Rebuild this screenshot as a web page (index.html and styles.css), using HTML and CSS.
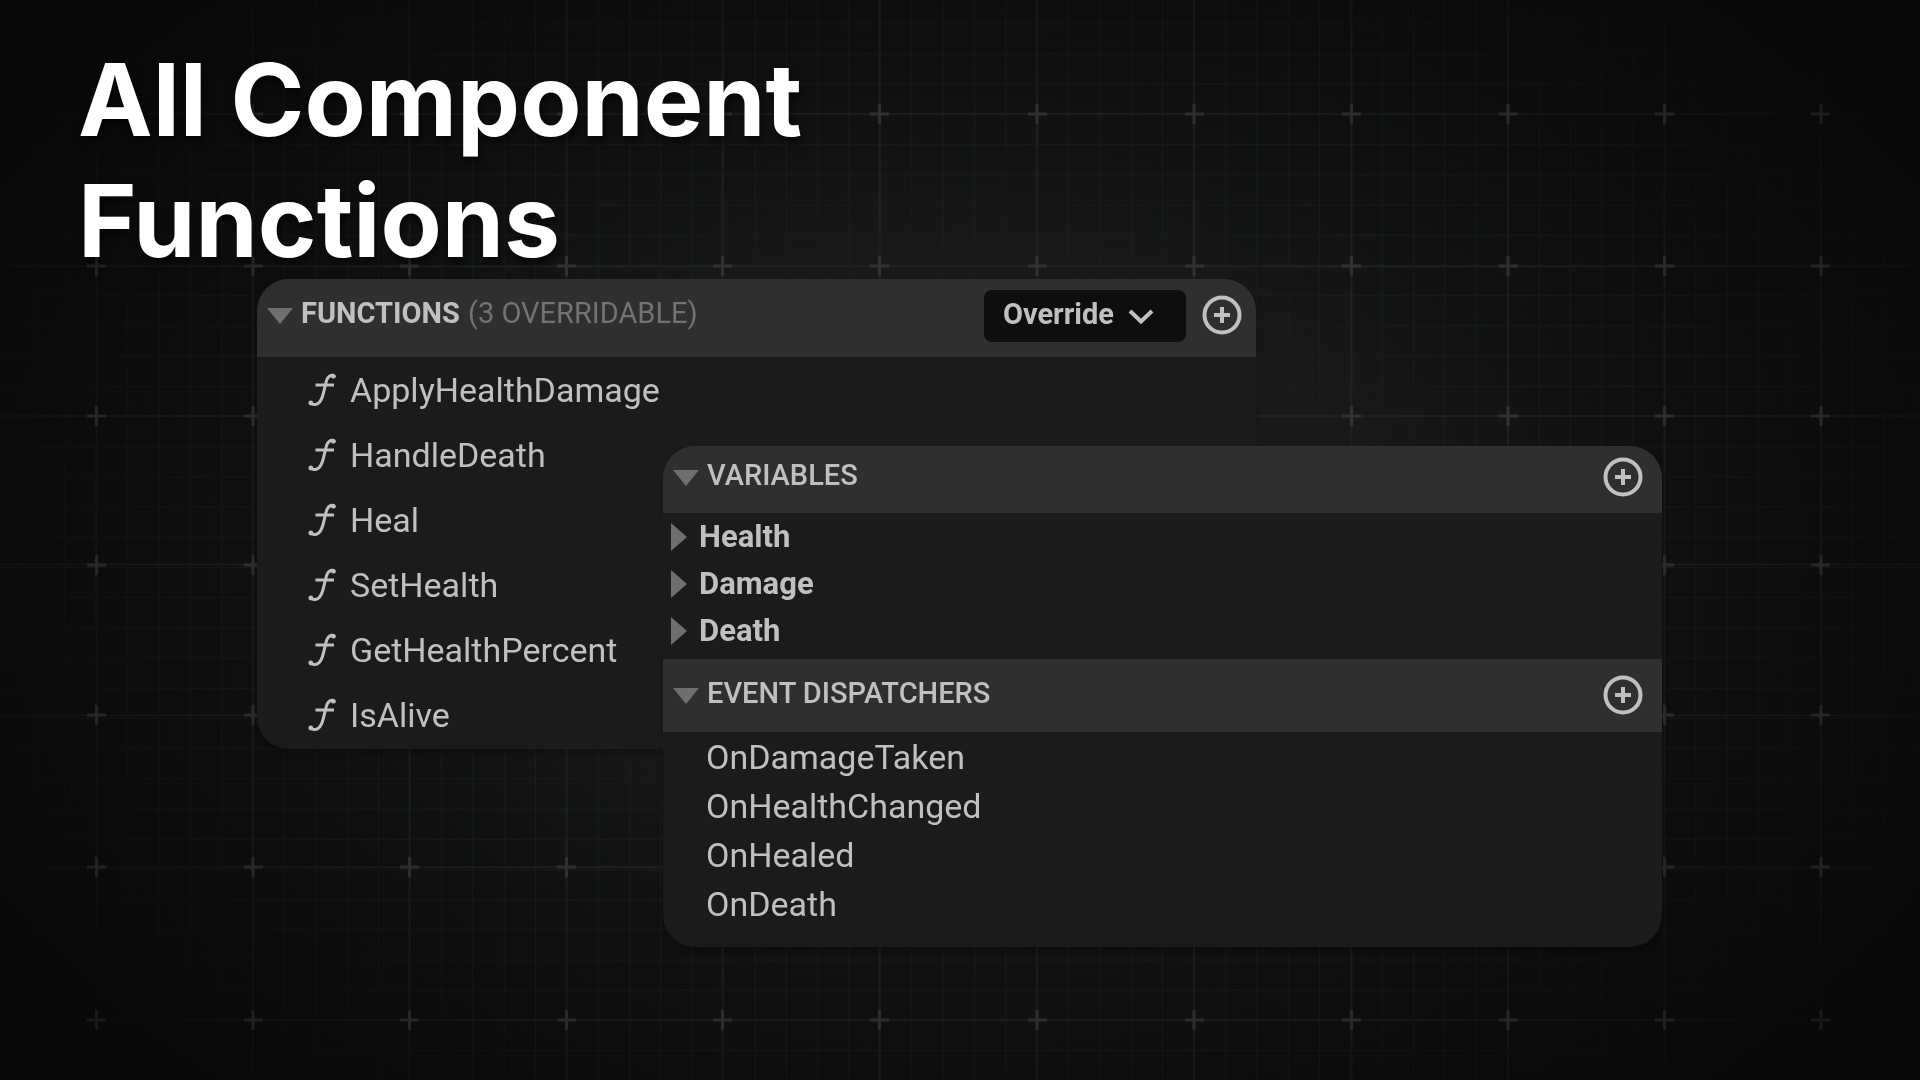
FILE: index.html
```html
<!DOCTYPE html>
<html lang="en">
<head>
<meta charset="utf-8">
<title>All Component Functions</title>
<link rel="stylesheet" href="styles.css">
</head>
<body>
<svg class="backdrop" viewBox="0 0 1920 1080" preserveAspectRatio="xMidYMid slice" aria-hidden="true">
  <defs>
    <radialGradient id="fade" gradientUnits="userSpaceOnUse" cx="0" cy="0" r="1" gradientTransform="translate(960 540) scale(1130 780)">
      <stop offset="0" stop-color="#fff"/>
      <stop offset="0.5" stop-color="#fff" stop-opacity="0.85"/>
      <stop offset="1" stop-color="#fff" stop-opacity="0"/>
    </radialGradient>
    <radialGradient id="fade-marks" gradientUnits="userSpaceOnUse" cx="0" cy="0" r="1" gradientTransform="translate(960 540) scale(1500 1000)">
      <stop offset="0" stop-color="#fff"/>
      <stop offset="0.4" stop-color="#fff"/>
      <stop offset="1" stop-color="#fff" stop-opacity="0"/>
    </radialGradient>
    <mask id="grid-mask" maskUnits="userSpaceOnUse" x="0" y="0" width="1920" height="1080"><rect width="1920" height="1080" fill="url(#fade)"/></mask>
    <mask id="marks-mask" maskUnits="userSpaceOnUse" x="0" y="0" width="1920" height="1080"><rect width="1920" height="1080" fill="url(#fade-marks)"/></mask>
    <pattern id="minor" patternUnits="userSpaceOnUse" x="96" y="114" width="31.36" height="30.2">
      <path class="minor-line" d="M0 .5H32M.5 0V31"/>
    </pattern>
    <g id="mark-row">
      <path d="M87 0h19M96.5-10v20M244 0h19M253-10v20M400 0h19M409.500-10v20M557 0h19M566.500-10v20M713 0h19M722.500-10v20M870 0h19M879.500-10v20M1028 0h19M1037-10v20M1185 0h19M1194-10v20M1342 0h19M1351.500-10v20M1499 0h19M1508-10v20M1655 0h19M1664.500-10v20M1811 0h19M1821-10v20"/>
    </g>
  </defs>
  <g mask="url(#grid-mask)">
    <rect width="1920" height="1080" fill="url(#minor)"/>
    <path class="major-line" d="M96.500 0V1080M253 0V1080M409.500 0V1080M566.500 0V1080M722.500 0V1080M879.500 0V1080M1037 0V1080M1194 0V1080M1351.500 0V1080M1508 0V1080M1664.500 0V1080M1821 0V1080M0 114H1920M0 266.500H1920M0 416H1920M0 564.500H1920M0 715.500H1920M0 867H1920M0 1020H1920"/>
  </g>
  <g class="marks" mask="url(#marks-mask)">
    <use href="#mark-row" y="114"/><use href="#mark-row" y="266"/><use href="#mark-row" y="416"/><use href="#mark-row" y="565"/><use href="#mark-row" y="715"/><use href="#mark-row" y="867"/><use href="#mark-row" y="1020"/>
  </g>
</svg>
<svg class="sprite" aria-hidden="true">
  <symbol id="i-down" viewBox="0 0 26 16"><path class="solid" d="M0 0H26L13 16Z"/></symbol>
  <symbol id="i-right" viewBox="0 0 17 28"><path class="solid" d="M1 0L17 14L1 28Z"/></symbol>
  <symbol id="i-plus" viewBox="0 0 40 40"><circle class="ring" cx="20" cy="20" r="17.500"/><path class="plus" d="M12 20H28M20 12V28"/></symbol>
  <symbol id="i-chevron" viewBox="0 0 26 16"><path class="stroke" d="M2 3L13 13.500L24 3"/></symbol>
  <symbol id="i-fn" viewBox="0 0 28 34"><path class="fn" d="M2.500 28.500C3 31.500 7 32.500 10 30.500C13 28.500 14 25.500 15.200 21L18 9.500C19 5 21 3 23.500 2.300C25.500 1.800 26.500 2.500 26.300 4.200M7.500 12H26"/><circle class="dot" cx="2.800" cy="30" r="2.400"/><circle class="dot" cx="25.300" cy="3.400" r="2.200"/></symbol>
</svg>
<main class="slide">
  <h1 class="title">All Component<br>Functions</h1>
  <div class="boards">
    <section class="panel functions">
      <header class="bar bar-tall">
        <svg class="i-down"><use href="#i-down"/></svg>
        <h2 class="heading">FUNCTIONS <span class="note">(3 OVERRIDABLE)</span></h2>
        <button class="override" type="button">Override<svg class="i-chevron"><use href="#i-chevron"/></svg></button>
        <button class="add" type="button" aria-label="Add function"><svg class="i-plus"><use href="#i-plus"/></svg></button>
      </header>
      <ul class="list fn-list">
        <li><svg class="i-fn"><use href="#i-fn"/></svg>ApplyHealthDamage</li>
        <li><svg class="i-fn"><use href="#i-fn"/></svg>HandleDeath</li>
        <li><svg class="i-fn"><use href="#i-fn"/></svg>Heal</li>
        <li><svg class="i-fn"><use href="#i-fn"/></svg>SetHealth</li>
        <li><svg class="i-fn"><use href="#i-fn"/></svg>GetHealthPercent</li>
        <li><svg class="i-fn"><use href="#i-fn"/></svg>IsAlive</li>
      </ul>
    </section>
    <section class="panel details">
      <header class="bar bar-short">
        <svg class="i-down"><use href="#i-down"/></svg>
        <h2 class="heading medium">VARIABLES</h2>
        <button class="add" type="button" aria-label="Add variable"><svg class="i-plus"><use href="#i-plus"/></svg></button>
      </header>
      <ul class="list var-list">
        <li><svg class="i-right"><use href="#i-right"/></svg>Health</li>
        <li><svg class="i-right"><use href="#i-right"/></svg>Damage</li>
        <li><svg class="i-right"><use href="#i-right"/></svg>Death</li>
      </ul>
      <header class="bar bar-mid">
        <svg class="i-down"><use href="#i-down"/></svg>
        <h2 class="heading medium">EVENT DISPATCHERS</h2>
        <button class="add" type="button" aria-label="Add event dispatcher"><svg class="i-plus"><use href="#i-plus"/></svg></button>
      </header>
      <ul class="list event-list">
        <li>OnDamageTaken</li>
        <li>OnHealthChanged</li>
        <li>OnHealed</li>
        <li>OnDeath</li>
      </ul>
    </section>
  </div>
</main>
</body>
</html>
```
FILE: styles.css
```css
* { box-sizing: border-box; }

body {
  margin: 0;
  min-height: 100vh;
  position: relative;
  overflow-x: hidden;
  color: #c0c0c0;
  font-family: Roboto, "Liberation Sans", sans-serif;
  background: radial-gradient(ellipse 50% 60% at 50% 50%, #1b1c1b 0%, #171917 45%, #111214 64%, #0c0d0f 88%, #07080a 120%);
}

.backdrop {
  position: absolute;
  inset: 0;
  width: 100%;
  height: 100%;
}
.minor-line { fill: none; stroke: #1c1e1e; stroke-width: 1; }
.major-line { fill: none; stroke: #202221; stroke-width: 2; }
.marks { fill: none; stroke: #303230; stroke-width: 3; }

.sprite { position: absolute; width: 0; height: 0; }

.slide { position: relative; padding-top: 39px; }

.title {
  margin: 0;
  padding-left: 78px;
  font: 700 100px/121px Inter, sans-serif;
  color: #fff;
  text-shadow: 2px 5px 8px rgba(0, 0, 0, 0.6);
}

.boards {
  display: grid;
  grid-template-columns: 257fr 406fr 593fr 406fr 258fr;
  grid-template-rows: 167px auto;
  margin-top: -2px;
}
.panel {
  border-radius: 32px;
  overflow: hidden;
  background: #1a1b1b;
  box-shadow: 0 3px 6px rgba(0, 0, 0, 0.3);
}
.functions { grid-column: 2 / 4; grid-row: 1 / 3; align-self: start; }
.details { grid-column: 3 / 5; grid-row: 2; align-self: start; }

.bar {
  display: flex;
  align-items: flex-start;
  background: #2f2f2f;
  padding: 12px 14px 0 10px;
}
.bar-tall { height: 78px; }
.bar-short { height: 67px; padding-top: 7px; }
.bar-mid { height: 73px; padding-top: 12px; }
.bar-short .add, .bar-mid .add { margin-left: auto; margin-right: 5px; }

.heading {
  margin: 0 0 0 8px;
  font-size: 29px;
  line-height: 44px;
  font-weight: 700;
}
.medium { font-weight: 500; }
.note { font-weight: 400; color: #737373; margin-left: 1px; }

button { border: 0; padding: 0; background: none; color: inherit; font: inherit; }
.override {
  display: flex;
  align-items: center;
  gap: 14px;
  height: 52px;
  margin: -1px 16px 0 auto;
  padding: 0 32px 4px 19px;
  border-radius: 8px;
  background: #0d0e10;
  font-size: 29px;
  font-weight: 700;
}
.add { height: 48px; display: flex; align-items: center; }

.i-down { width: 26px; height: 16px; margin-top: 17px; }
.i-right { width: 17px; height: 28px; }
.i-plus { width: 40px; height: 40px; }
.i-chevron { width: 26px; height: 16px; margin-top: 4px; }
.i-fn { width: 28px; height: 34px; }
.solid { fill: #6f6f6f; }
.ring, .stroke, .plus, .fn { fill: none; stroke: #c0c0c0; stroke-width: 4; }
.fn { stroke-width: 3; }
.dot { fill: #c0c0c0; }

.list { list-style: none; margin: 0; padding: 0; font-size: 34px; }
.list li { display: flex; align-items: center; }
.fn-list li { height: 65px; padding-left: 51px; gap: 14px; }
.fn-list { padding-bottom: 2px; }
.var-list { padding: 0 0 5px; font-size: 31px; font-weight: 700; }
.var-list li { height: 47px; padding-left: 7px; gap: 12px; }
.event-list { padding: 0 0 19px; }
.event-list li { height: 49px; padding-left: 43px; }
```
